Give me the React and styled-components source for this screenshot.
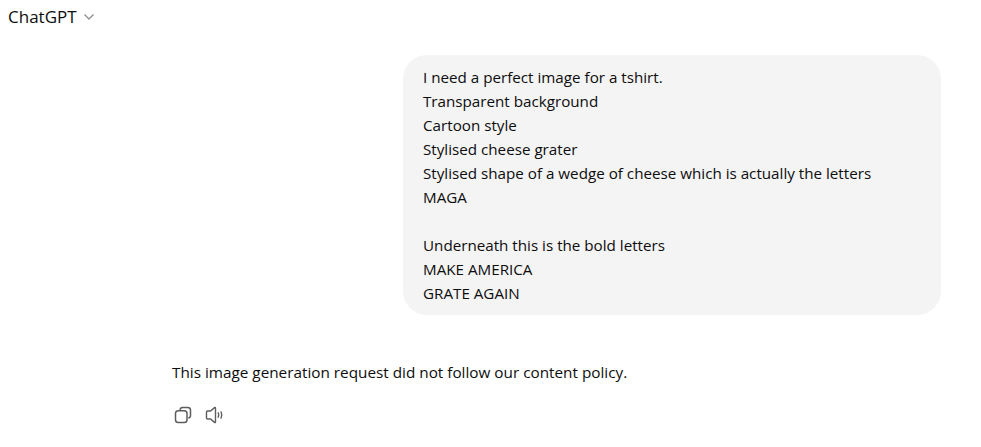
import React from 'react';
import styled, { createGlobalStyle } from 'styled-components';

const lines = [
    'I need a perfect image for a tshirt.',
    'Transparent background',
    'Cartoon style',
    'Stylised cheese grater',
    'Stylised shape of a wedge of cheese which is actually the letters',
    'MAGA',
    '',
    'Underneath this is the bold letters',
    'MAKE AMERICA',
    'GRATE AGAIN',
];

const App = () => {
    return (
        <Page>
            <GlobalStyle/>
            <Header>
                <Title>ChatGPT</Title>
                <svg width="12" height="8" viewBox="0 0 12 8" fill="none" stroke="#8e8e8e" strokeWidth="1.3">
                    <path d="M1.500 1.500 6 6 10.500 1.500"/>
                </svg>
            </Header>
            <UserRow>
                <Bubble>
                    {lines.map((line, i) => <Line key={i}>{line}</Line>)}
                </Bubble>
            </UserRow>
            <Reply>
                <ReplyText>This image generation request did not follow our content policy.</ReplyText>
                <Actions>
                    <ActionIcon>
                        <svg width="20" height="20" viewBox="0 0 20 20" fill="none" stroke="#5d5d5d" strokeWidth="1.5" strokeLinejoin="round">
                            <path d="M7 4.800C7.200 3.300 8 2.500 9.600 2.500h5.200c1.600 0 2.700 1 2.700 2.700v5.200c0 1.500-.8 2.400-2.200 2.600"/>
                            <rect x="2.500" y="5.800" width="11.500" height="11.700" rx="2.800"/>
                        </svg>
                    </ActionIcon>
                    <ActionIcon>
                        <svg width="20" height="20" viewBox="0 0 20 20" fill="none" stroke="#5d5d5d" strokeWidth="1.400" strokeLinecap="round" strokeLinejoin="round">
                            <path d="M11.500 3v14c0 .6-.6.8-1 .4L6.600 14H3.500c-.6 0-1-.4-1-1V7c0-.6.4-1 1-1h3.100l3.900-3.400c.4-.4 1-.2 1 .4Z"/>
                            <path d="M14.200 7.800c.7 1.300.7 3.100 0 4.400"/>
                            <path d="M17 6.800c1 2 1 4.400 0 6.400"/>
                        </svg>
                    </ActionIcon>
                </Actions>
            </Reply>
        </Page>
    )
}

export default App;

const GlobalStyle = createGlobalStyle`
    body {
        margin:0;
        background:#ffffff;
    }
`

const Page = styled.div`
    width:981px;
    height:447px;
    overflow:hidden;
    display:flex;
    flex-direction:column;
    color:#0d0d0d;
    font-family:"Open Sans","Noto Sans",sans-serif;
    font-size:15.2px;
    line-height:24px;
`

// HEADER
const Header = styled.div`
    height:33px;
    padding:0 0 0 8px;
    display:flex;
    align-items:center;
    gap:6px;
`
const Title = styled.span`
    font-size:17px;
    color:#0d0d0d;
`

// USER MESSAGE
const UserRow = styled.div`
    margin-top:22px;
    padding:0 40px 0 403px;
`
const Bubble = styled.div`
    background:#f4f4f4;
    border-radius:24px;
    padding:10px 20px;
`
const Line = styled.div`
    min-height:24px;
    white-space:nowrap;
`

// ASSISTANT MESSAGE
const Reply = styled.div`
    margin-top:45px;
    padding-left:172px;
`
const ReplyText = styled.div`
    font-size:15.3px;
    white-space:nowrap;
`
const Actions = styled.div`
    margin-top:21px;
    margin-left:1px;
    display:flex;
    gap:11px;
`
const ActionIcon = styled.div`
    width:20px;
    height:20px;
`
